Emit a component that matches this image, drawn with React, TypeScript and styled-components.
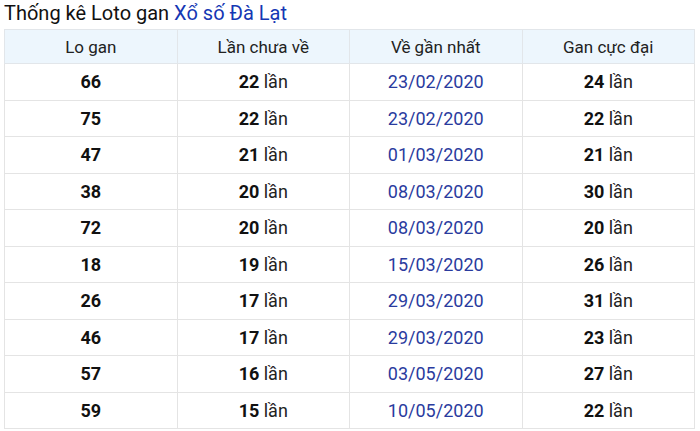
import React from 'react';
import styled, { createGlobalStyle } from 'styled-components';

const GlobalStyle = createGlobalStyle`
  html, body {
    margin: 0;
    padding: 0;
    background: #fff;
  }
  body {
    font-family: Roboto, "Liberation Sans", Arial, sans-serif;
    color: #222;
  }
`;

const Wrapper = styled.section`
  padding: 0 5px 0 4px;
`;

const Title = styled.h2`
  margin: 0;
  height: 29px;
  line-height: 27px;
  font-size: 20px;
  font-weight: 400;
  color: #111;
`;

const TitleLink = styled.a`
  color: #1537b4;
  text-decoration: none;
`;

const Table = styled.table`
  width: 100%;
  border-collapse: collapse;
  table-layout: fixed;
`;

const HeadCell = styled.th`
  height: 33px;
  padding: 0;
  background: #edf6fd;
  border: 1px solid #e2e6ea;
  font-size: 17px;
  font-weight: 400;
  color: #222;
  text-align: center;
`;

const Row = styled.tr`
  height: 36.5px;
`;

const Cell = styled.td<{ $blue?: boolean }>`
  padding: 0;
  border: 1px solid #e4e4e4;
  font-size: 18px;
  text-align: center;
  color: ${(p) => (p.$blue ? '#2a3b9e' : '#222')};
`;

const Strong = styled.b`
  font-weight: 700;
  color: #111;
`;

const rows = [
  ['66', '22', '23/02/2020', '24'],
  ['75', '22', '23/02/2020', '22'],
  ['47', '21', '01/03/2020', '21'],
  ['38', '20', '08/03/2020', '30'],
  ['72', '20', '08/03/2020', '20'],
  ['18', '19', '15/03/2020', '26'],
  ['26', '17', '29/03/2020', '31'],
  ['46', '17', '29/03/2020', '23'],
  ['57', '16', '03/05/2020', '27'],
  ['59', '15', '10/05/2020', '22'],
];

const App = () => {
  return (
    <Wrapper>
      <GlobalStyle />
      <Title>
        Thống kê Loto gan <TitleLink href="#">Xổ số Đà Lạt</TitleLink>
      </Title>
      <Table>
        <thead>
          <tr>
            <HeadCell>Lo gan</HeadCell>
            <HeadCell>Lần chưa về</HeadCell>
            <HeadCell>Về gần nhất</HeadCell>
            <HeadCell>Gan cực đại</HeadCell>
          </tr>
        </thead>
        <tbody>
          {rows.map(([lo, miss, last, max]) => (
            <Row key={lo}>
              <Cell><Strong>{lo}</Strong></Cell>
              <Cell><Strong>{miss}</Strong> lần</Cell>
              <Cell $blue>{last}</Cell>
              <Cell><Strong>{max}</Strong> lần</Cell>
            </Row>
          ))}
        </tbody>
      </Table>
    </Wrapper>
  );
};

export default App;
